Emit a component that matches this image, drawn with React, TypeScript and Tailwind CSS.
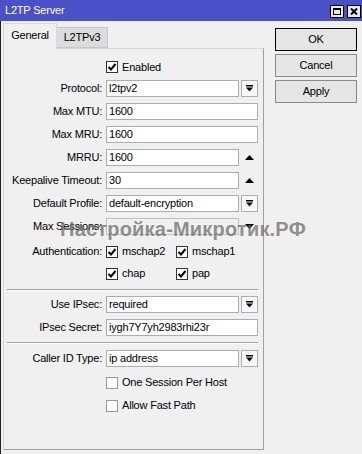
import React from "react";

const DropBtn = () => (
  <div className="ml-[2px] w-[17px] h-[17px] border border-[#adadad] bg-[#f7f7f7] flex items-center justify-center">
    <svg width="7" height="7" viewBox="0 0 7 7">
      <rect x="0" y="0" width="7" height="1.5" fill="#000" />
      <polygon points="0,2.5 7,2.5 3.5,6.5" fill="#000" />
    </svg>
  </div>
);

const Tri = ({ up }: { up: boolean }) => (
  <div className="ml-[2px] w-[17px] h-[17px] flex items-center justify-center">
    <svg width="9" height="5" viewBox="0 0 9 5">
      {up ? <polygon points="0,5 9,5 4.5,0" fill="#000" /> : <polygon points="0,0 9,0 4.5,5" fill="#000" />}
    </svg>
  </div>
);

const Check = ({ checked }: { checked: boolean }) => (
  <div
    className={
      checked
        ? "w-[12px] h-[12px] border border-[#333333] bg-white flex items-center justify-center"
        : "w-[12px] h-[12px] border border-[#999999] bg-white flex items-center justify-center"
    }
  >
    {checked && (
      <svg width="10" height="10" viewBox="0 0 10 10">
        <path d="M1.5 5 L4 7.5 L8.5 2" stroke="#000" strokeWidth="2" fill="none" />
      </svg>
    )}
  </div>
);

const Row = ({ label, children, cls }: { label: string; children: React.ReactNode; cls: string }) => (
  <div className={"flex items-center h-[17px] " + cls}>
    <div className="w-[98px] text-right whitespace-nowrap">{label}</div>
    <div className="ml-[4px] flex items-center">{children}</div>
  </div>
);

const Input = ({ value, wide }: { value: string; wide: boolean }) => (
  <div
    className={
      wide
        ? "w-[152px] h-[17px] border border-[#abadb3] bg-white pl-[2px] flex items-center"
        : "w-[133px] h-[17px] border border-[#abadb3] bg-white pl-[2px] flex items-center"
    }
  >
    {value}
  </div>
);

const CheckLabel = ({ checked, label }: { checked: boolean; label: string }) => (
  <div className="flex items-center">
    <Check checked={checked} />
    <span className="ml-[4px]">{label}</span>
  </div>
);

export default function App() {
  return (
    <div className="relative w-[362px] h-[454px] overflow-hidden bg-[#f0f0f0] text-black text-[11px] tracking-[-0.2px] font-['Liberation_Sans',Arial,sans-serif] flex flex-col">
      <div className="h-[21px] bg-[#4b50c9] flex items-center pl-[5px] text-white text-[11px] shrink-0">
        <span>L2TP Server</span>
        <div className="ml-auto mr-[1px] flex gap-[3px] self-start mt-[5px]">
          <div className="w-[14px] h-[13px] bg-[#e8e8e8] border border-black flex items-center justify-center">
            <svg width="8" height="7" viewBox="0 0 8 7">
              <rect x="0.5" y="0.5" width="7" height="6" fill="none" stroke="#000" />
              <rect x="0" y="0" width="8" height="2" fill="#000" />
            </svg>
          </div>
          <div className="w-[14px] h-[13px] bg-[#e8e8e8] border border-black flex items-center justify-center">
            <svg width="8" height="7" viewBox="0 0 8 7">
              <path d="M1 0.5 L7 6.5 M7 0.5 L1 6.5" stroke="#000" strokeWidth="2" />
            </svg>
          </div>
        </div>
      </div>
      <div className="flex flex-1 border-l border-[#222222]">
        <div className="pl-[2px] mt-[2px] flex flex-col">
          <div className="h-[25px] flex items-start">
            <div className="relative z-10 w-[54px] h-[26px] border border-b-0 border-[#d9d9d9] bg-[#f0f0f0] flex items-center justify-center pb-[2px]">
              General
            </div>
            <div className="mt-[4px] w-[51px] h-[21px] border border-l-0 border-[#c8c8c8] bg-[#dcdcdc] flex items-center justify-center">
              L2TPv3
            </div>
          </div>
          <div className="w-[261px] h-[402px] border border-[#d9d9d9] border-r-[#a0a0a0] border-b-[#a0a0a0] flex flex-col pt-[12px]">
            <div className="flex items-center h-[12px]">
              <div className="w-[98px]" />
              <div className="ml-[4px]">
                <CheckLabel checked={true} label="Enabled" />
              </div>
            </div>
            <Row label="Protocol:" cls="mt-[7px]">
              <Input value="l2tpv2" wide={false} />
              <DropBtn />
            </Row>
            <Row label="Max MTU:" cls="mt-[6px]">
              <Input value="1600" wide={true} />
            </Row>
            <Row label="Max MRU:" cls="mt-[6px]">
              <Input value="1600" wide={true} />
            </Row>
            <Row label="MRRU:" cls="mt-[6px]">
              <Input value="1600" wide={false} />
              <Tri up={true} />
            </Row>
            <Row label="Keepalive Timeout:" cls="mt-[6px]">
              <Input value="30" wide={false} />
              <Tri up={true} />
            </Row>
            <Row label="Default Profile:" cls="mt-[6px]">
              <Input value="default-encryption" wide={false} />
              <DropBtn />
            </Row>
            <Row label="Max Sessions:" cls="mt-[6px]">
              <div className="w-[133px] h-[17px] border border-[#c0c0c0]" />
              <Tri up={false} />
            </Row>
            <Row label="Authentication:" cls="mt-[8px]">
              <div className="w-[70px]">
                <CheckLabel checked={true} label="mschap2" />
              </div>
              <CheckLabel checked={true} label="mschap1" />
            </Row>
            <Row label="" cls="mt-[5px]">
              <div className="w-[70px]">
                <CheckLabel checked={true} label="chap" />
              </div>
              <CheckLabel checked={true} label="pap" />
            </Row>
            <div className="mt-[7px] ml-[3px] w-[251px] border-t border-[#a0a0a0] border-b border-b-white" />
            <Row label="Use IPsec:" cls="mt-[5px]">
              <Input value="required" wide={false} />
              <DropBtn />
            </Row>
            <Row label="IPsec Secret:" cls="mt-[6px]">
              <Input value="iygh7Y7yh2983rhi23r" wide={true} />
            </Row>
            <div className="mt-[6px] ml-[3px] w-[251px] border-t border-[#a0a0a0] border-b border-b-white" />
            <Row label="Caller ID Type:" cls="mt-[6px]">
              <Input value="ip address" wide={false} />
              <DropBtn />
            </Row>
            <Row label="" cls="mt-[7px]">
              <CheckLabel checked={false} label="One Session Per Host" />
            </Row>
            <Row label="" cls="mt-[6px]">
              <CheckLabel checked={false} label="Allow Fast Path" />
            </Row>
          </div>
        </div>
        <div className="ml-[11px] mt-[7px] flex flex-col gap-[3px]">
          <div className="w-[82px] h-[23px] border border-black bg-[#e5e5e5] flex items-center justify-center">OK</div>
          <div className="w-[82px] h-[23px] border border-[#8a8a8a] bg-[#e5e5e5] flex items-center justify-center">Cancel</div>
          <div className="w-[82px] h-[23px] border border-[#8a8a8a] bg-[#e5e5e5] flex items-center justify-center">Apply</div>
        </div>
      </div>
      <div className="absolute left-[60px] top-[214px] text-[20px] font-bold tracking-[0.2px] text-[#6e6e6e]/75 whitespace-nowrap pointer-events-none">
        Настройка-Микротик.РФ
      </div>
    </div>
  );
}
